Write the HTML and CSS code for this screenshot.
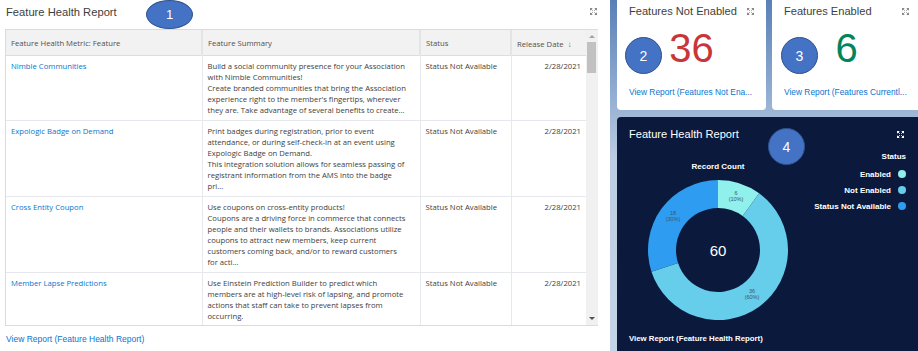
FILE: index.html
```html
<!DOCTYPE html>
<html lang="en">
<head>
  <meta charset="UTF-8" />
  <title>Feature Health Dashboard</title>
  <link rel="stylesheet" href="styles.css">
</head>
<body>
  <div class="page">
    <section class="report">
      <header class="report-head">
        <h2>Feature Health Report</h2>
        <svg class="expand" viewBox="0 0 10 10"><path class="tip" d="M0 0h4L0 4zM10 0v4L6 0zM0 10V6l4 4zM10 10H6l4-4z"/><path class="stem" d="M1.5 1.5L4 4M8.5 1.5L6 4M1.5 8.5L4 6M8.5 8.5L6 6"/></svg>
      </header>

      <div class="grid-wrap">
        <table class="grid">
          <colgroup>
            <col style="width:196px">
            <col style="width:218px">
            <col style="width:91px">
            <col style="width:75px">
          </colgroup>
          <thead>
            <tr>
              <th>Feature Health Metric: Feature</th>
              <th>Feature Summary</th>
              <th>Status</th>
              <th>Release Date <span class="sort">&#8595;</span></th>
            </tr>
          </thead>
          <tbody>
            <tr>
              <td><a href="#">Nimble Communities</a></td>
              <td>Build a social community presence for your Association<br>with Nimble Communities!<br>Create branded communities that bring the Association<br>experience right to the member's fingertips, wherever<br>they are. Take advantage of several benefits to create...</td>
              <td>Status Not Available</td>
              <td class="date">2/28/2021</td>
            </tr>
            <tr>
              <td><a href="#">Expologic Badge on Demand</a></td>
              <td>Print badges during registration, prior to event<br>attendance, or during self-check-in at an event using<br>Expologic Badge on Demand.<br>This integration solution allows for seamless passing of<br>registrant information from the AMS into the badge<br>pri...</td>
              <td>Status Not Available</td>
              <td class="date">2/28/2021</td>
            </tr>
            <tr>
              <td><a href="#">Cross Entity Coupon</a></td>
              <td>Use coupons on cross-entity products!<br>Coupons are a driving force in commerce that connects<br>people and their wallets to brands. Associations utilize<br>coupons to attract new members, keep current<br>customers coming back, and/or to reward customers<br>for acti...</td>
              <td>Status Not Available</td>
              <td class="date">2/28/2021</td>
            </tr>
            <tr>
              <td><a href="#">Member Lapse Predictions</a></td>
              <td>Use Einstein Prediction Builder to predict which<br>members are at high-level risk of lapsing, and promote<br>actions that staff can take to prevent lapses from<br>occurring.</td>
              <td>Status Not Available</td>
              <td class="date">2/28/2021</td>
            </tr>
          </tbody>
        </table>
        <div class="scrollbar">
          <span class="arrow up"></span>
          <span class="thumb"></span>
          <span class="arrow down"></span>
        </div>
      </div>

      <a class="view-link" href="#">View Report (Feature Health Report)</a>
      <span class="badge badge-1">1</span>
    </section>

    <aside class="side">
      <div class="cards">
        <div class="card">
          <div class="card-head">
            <h3>Features Not Enabled</h3>
            <svg class="expand" viewBox="0 0 10 10"><path class="tip" d="M0 0h4L0 4zM10 0v4L6 0zM0 10V6l4 4zM10 10H6l4-4z"/><path class="stem" d="M1.5 1.5L4 4M8.5 1.5L6 4M1.5 8.5L4 6M8.5 8.5L6 6"/></svg>
          </div>
          <div class="card-value red">36</div>
          <a class="card-link" href="#">View Report (Features Not Ena...</a>
          <span class="badge badge-2">2</span>
        </div>
        <div class="card">
          <div class="card-head">
            <h3>Features Enabled</h3>
            <svg class="expand" viewBox="0 0 10 10"><path class="tip" d="M0 0h4L0 4zM10 0v4L6 0zM0 10V6l4 4zM10 10H6l4-4z"/><path class="stem" d="M1.5 1.5L4 4M8.5 1.5L6 4M1.5 8.5L4 6M8.5 8.5L6 6"/></svg>
          </div>
          <div class="card-value green">6</div>
          <a class="card-link" href="#">View Report (Features Currentl...</a>
          <span class="badge badge-3">3</span>
        </div>
      </div>

      <div class="chart-panel">
        <div class="card-head">
          <h3>Feature Health Report</h3>
          <svg class="expand" viewBox="0 0 10 10"><path class="tip" d="M0 0h4L0 4zM10 0v4L6 0zM0 10V6l4 4zM10 10H6l4-4z"/><path class="stem" d="M1.5 1.5L4 4M8.5 1.5L6 4M1.5 8.5L4 6M8.5 8.5L6 6"/></svg>
        </div>
        <div class="chart-body">
          <svg class="donut" width="180" height="172" viewBox="0 0 180 172">
            <text class="chart-title" x="89" y="19">Record Count</text>
            <path class="seg-enabled" d="M89 30A70 70 0 0 1 130.15 43.37L113.69 66.02A42 42 0 0 0 89 58Z"/>
            <path class="seg-not" d="M130.15 43.37A70 70 0 1 1 22.43 121.63L49.06 112.98A42 42 0 1 0 113.69 66.02Z"/>
            <path class="seg-na" d="M22.43 121.63A70 70 0 0 1 89 30L89 58A42 42 0 0 0 49.06 112.98Z"/>
            <text class="seg-label" x="107" y="45">6</text>
            <text class="seg-label" x="107" y="51">(10%)</text>
            <text class="seg-label" x="44" y="65">18</text>
            <text class="seg-label" x="44" y="71">(30%)</text>
            <text class="seg-label" x="123" y="143">36</text>
            <text class="seg-label" x="123" y="149">(60%)</text>
            <text class="total" x="89" y="105.5">60</text>
          </svg>
          <div class="legend">
            <div class="legend-title">Status</div>
            <ul>
              <li>Enabled <span class="dot enabled"></span></li>
              <li>Not Enabled <span class="dot not"></span></li>
              <li>Status Not Available <span class="dot na"></span></li>
            </ul>
          </div>
        </div>
        <a class="panel-link" href="#">View Report (Feature Health Report)</a>
        <span class="badge badge-4">4</span>
      </div>
    </aside>
  </div>
</body>
</html>
```

FILE: styles.css
```css
body {
  margin: 0;
  width: 918px;
  height: 351px;
  overflow: hidden;
  font-family: "Liberation Sans", Arial, sans-serif;
  background: #c4d3e6;
}

a {
  text-decoration: none;
}

.page {
  display: flex;
  height: 351px;
}

/* left report */
.report {
  position: relative;
  flex: none;
  width: 610px;
  padding-left: 5px;
  box-sizing: border-box;
  background: #fff;
}

.report-head {
  display: flex;
  justify-content: space-between;
  align-items: flex-start;
  height: 29px;
  padding: 5px 13px 0 1px;
  box-sizing: border-box;
}

.report-head h2 {
  margin: 0;
  font-size: 11.2px;
  line-height: 14px;
  font-weight: normal;
  color: #3e3e3c;
}

.report-head .expand {
  margin-top: 3px;
}

.expand {
  width: 7px;
  height: 7px;
  flex: none;
  color: #8a8886;
}

.expand .tip {
  fill: currentColor;
}

.expand .stem {
  fill: none;
  stroke: currentColor;
  stroke-width: 1.3;
}

.grid-wrap {
  display: flex;
  width: 593px;
  height: 297px;
  border: 1px solid #dddbda;
  border-right: none;
  box-sizing: border-box;
  overflow: hidden;
}

.grid {
  width: 580px;
  flex: none;
  table-layout: fixed;
  border-collapse: collapse;
  font-family: "Open Sans", sans-serif;
  font-size: 7.7px;
  color: #3e3e3c;
}

.grid th {
  height: 24px;
  padding: 1px 5px 0;
  text-align: left;
  font-weight: normal;
  color: #514f4d;
  background: #f3f2f2;
  border-right: 2px solid #e4e4e4;
  border-bottom: 1px solid #d8dde6;
}

.grid th:last-child {
  border-right: none;
}

.sort {
  color: #706e6b;
  font-size: 8px;
  margin-left: 2px;
}

.grid td {
  padding: 5px 5px 4px;
  vertical-align: top;
  line-height: 11px;
  white-space: nowrap;
  overflow: hidden;
  border-right: 1px solid #e6e8ee;
  border-bottom: 1px solid #e6e8ee;
}

.grid td:last-child {
  border-right: none;
}

.grid td a {
  color: #0a74d0;
}

.grid td.date {
  text-align: right;
}

.scrollbar {
  position: relative;
  width: 12px;
  flex: none;
  background: #f1f1f1;
}

.scrollbar .thumb {
  position: absolute;
  top: 12px;
  left: 1px;
  width: 9px;
  height: 31px;
  background: #c1c1c1;
}

.scrollbar .arrow {
  position: absolute;
  left: 3px;
  width: 0;
  height: 0;
  border-left: 3px solid transparent;
  border-right: 3px solid transparent;
}

.scrollbar .up {
  top: 5px;
  border-bottom: 3px solid #a3a3a3;
}

.scrollbar .down {
  bottom: 5px;
  border-top: 3px solid #505050;
}

.view-link {
  display: block;
  margin: 7px 0 0 1px;
  font-size: 8.5px;
  line-height: 12px;
  color: #0a74d0;
}

/* numbered callouts */
.badge {
  position: absolute;
  display: flex;
  align-items: center;
  justify-content: center;
  width: 37px;
  height: 37px;
  border-radius: 50%;
  background: #4472c4;
  border: 1px solid #2f528f;
  box-sizing: border-box;
  color: #fff;
  font-family: "Liberation Sans", Arial, sans-serif;
  font-size: 14px;
}

.badge-1 {
  left: 146px;
  top: 0;
  width: 47px;
  height: 29px;
  font-size: 13px;
}

.badge-2 {
  left: 8px;
  top: 37px;
}

.badge-3 {
  left: 9px;
  top: 37px;
}

.badge-4 {
  left: 151px;
  top: 11px;
}

/* right side */
.side {
  flex: none;
  width: 311px;
  padding-left: 7px;
  box-sizing: border-box;
  background: linear-gradient(180deg, #5a80b6 0%, #8eaad0 25%, #bccce2 45%, #c6d4e7 100%);
}

.cards {
  display: flex;
  gap: 6px;
  height: 110px;
}

.card {
  position: relative;
  width: 149px;
  flex: none;
  padding: 4px 12px 0;
  box-sizing: border-box;
  background: #fff;
  border-radius: 0 0 4px 4px;
}

.card-head {
  display: flex;
  justify-content: space-between;
  align-items: center;
  height: 14px;
}

.card-head h3 {
  margin: 0;
  font-size: 11.1px;
  line-height: 14px;
  font-weight: normal;
  color: #3e3e3c;
  white-space: nowrap;
}

.card-value {
  margin-top: 10px;
  font-size: 40px;
  line-height: 40px;
  text-align: center;
}

.red {
  color: #c8363a;
}

.green {
  color: #04845b;
}

.card-link {
  display: block;
  margin-top: 18px;
  font-size: 8.4px;
  line-height: 12px;
  color: #0a74d0;
  white-space: nowrap;
}

.chart-panel {
  position: relative;
  height: 234px;
  margin-top: 7px;
  padding: 10px 15px 0 12px;
  box-sizing: border-box;
  background: #0b1a3c;
  border-radius: 4px 4px 0 0;
  color: #fff;
}

.chart-panel h3 {
  color: #fff;
}

.chart-panel .expand {
  color: #fff;
  margin-right: 2px;
}

.chart-body {
  display: flex;
  margin-top: 9px;
}

.donut {
  flex: none;
  display: block;
}

.chart-title {
  fill: #fff;
  font-size: 8px;
  font-weight: bold;
  text-anchor: middle;
}

.seg-enabled {
  fill: #8ff0ec;
}

.seg-not {
  fill: #66cdea;
}

.seg-na {
  fill: #2e9cf0;
}

.seg-label {
  fill: #3d5673;
  font-size: 5.5px;
  text-anchor: middle;
}

.total {
  fill: #fff;
  font-size: 15px;
  text-anchor: middle;
}

.legend {
  margin-left: auto;
  text-align: right;
  font-size: 8px;
  font-weight: bold;
}

.legend-title {
  line-height: 14px;
}

.legend ul {
  list-style: none;
  margin: 2px 0 0;
  padding: 0;
}

.legend li {
  display: flex;
  justify-content: flex-end;
  align-items: center;
  gap: 7px;
  height: 16px;
}

.dot {
  width: 8px;
  height: 8px;
  border-radius: 50%;
}

.dot.enabled {
  background: #8ff0ec;
}

.dot.not {
  background: #66cdea;
}

.dot.na {
  background: #2e9cf0;
}

.panel-link {
  display: block;
  margin-top: 10px;
  font-size: 7.8px;
  font-weight: bold;
  line-height: 14px;
  color: #fff;
}
```
